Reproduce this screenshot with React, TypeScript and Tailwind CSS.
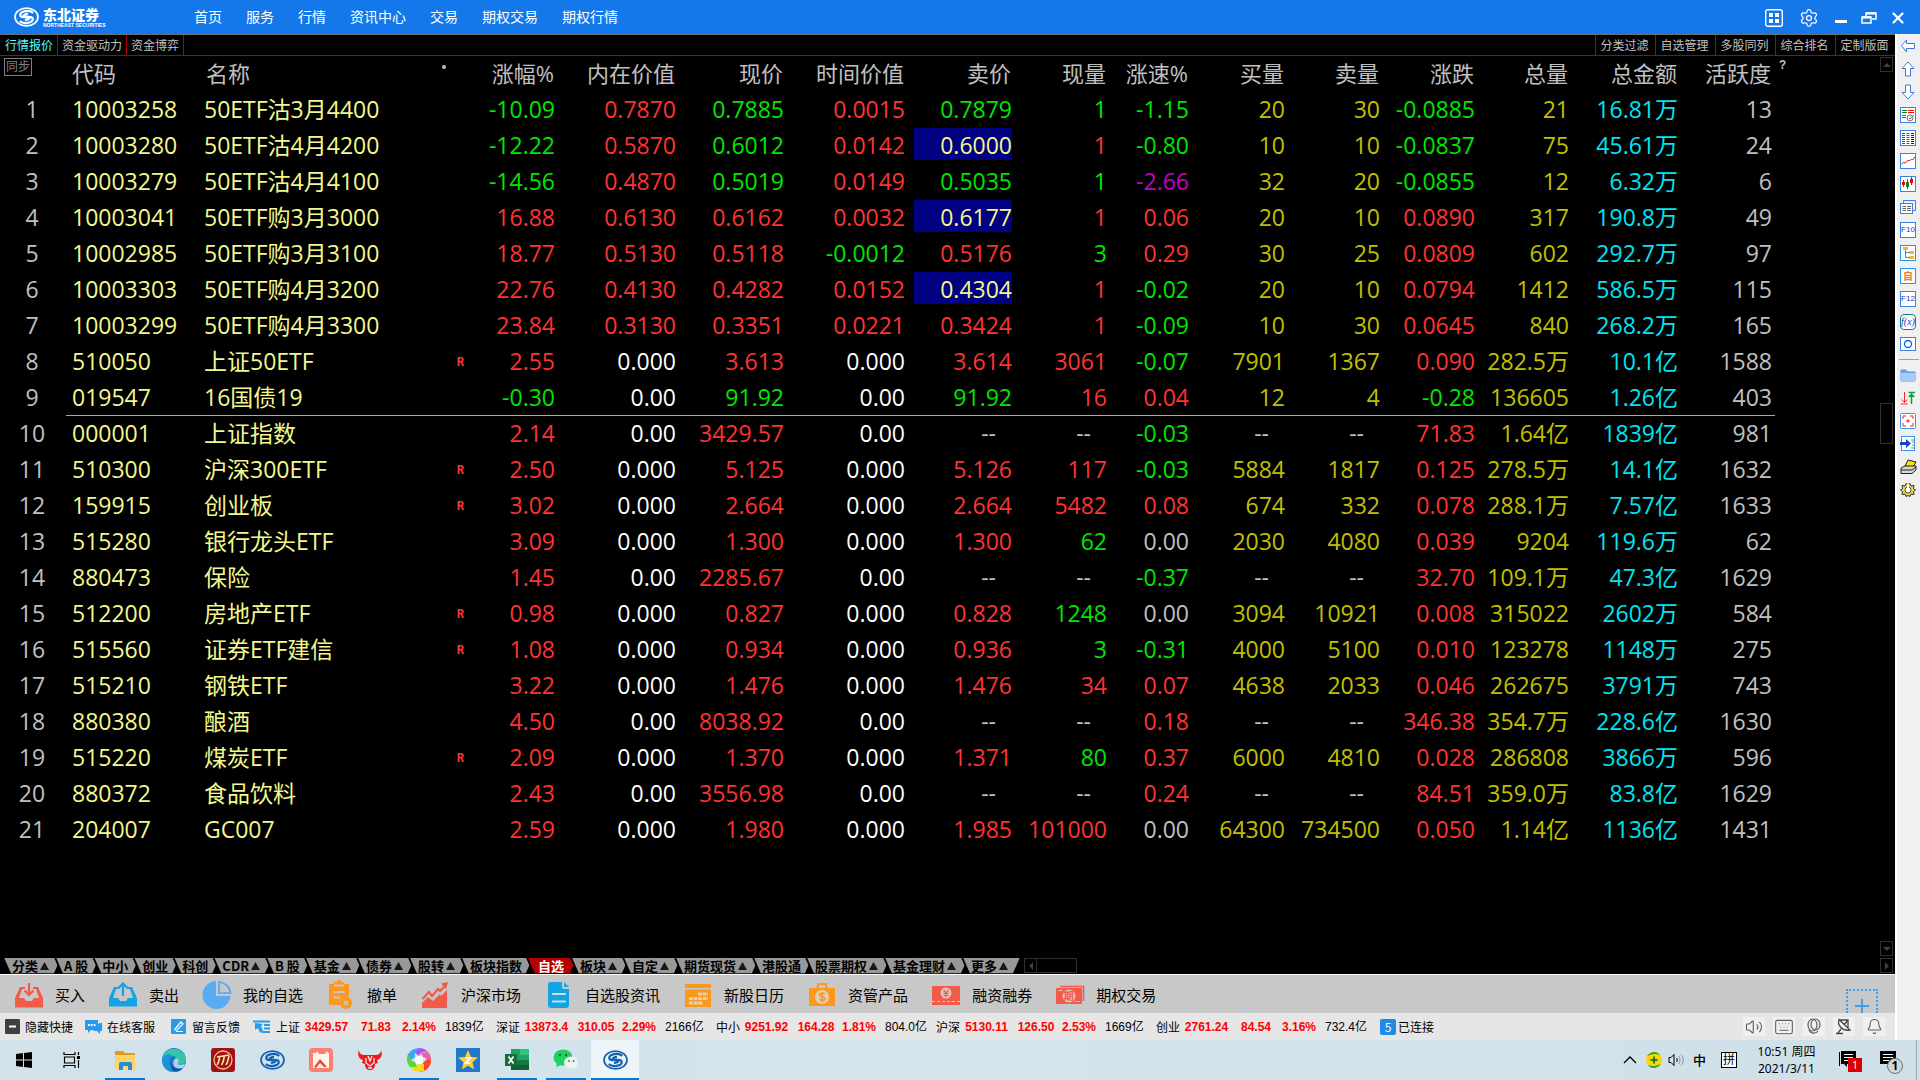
import type { ReactNode } from "react";
import { Bell, Keyboard, SatelliteDish, Settings, Volume2, X } from "lucide-react";

const tones: Record<string, string> = {
  r: "text-[#ff3232]",
  g: "text-[#00e600]",
  w: "text-white",
  n: "text-[#c0c0c0]",
  m: "text-[#c000c0]",
  h: "text-[#f4f88c]",
  y: "text-[#c0c000]",
  c: "text-[#00e4f4]",
};

const columns = [
  "涨幅%", "内在价值", "现价", "时间价值", "卖价", "现量", "涨速%",
  "买量", "卖量", "涨跌", "总量", "总金额", "活跃度",
];

// code | name | values in column order, then one tone letter per value
const quotes: [string, string, string, string][] = [
  ["10003258", "50ETF沽3月4400", "-10.09 0.7870 0.7885 0.0015 0.7879 1 -1.15 20 30 -0.0885 21 16.81万 13", "grgrgggyygycn"],
  ["10003280", "50ETF沽4月4200", "-12.22 0.5870 0.6012 0.0142 0.6000 1 -0.80 10 10 -0.0837 75 45.61万 24", "grgrhrgyygycn"],
  ["10003279", "50ETF沽4月4100", "-14.56 0.4870 0.5019 0.0149 0.5035 1 -2.66 32 20 -0.0855 12 6.32万 6", "grgrggmyygycn"],
  ["10003041", "50ETF购3月3000", "16.88 0.6130 0.6162 0.0032 0.6177 1 0.06 20 10 0.0890 317 190.8万 49", "rrrrhrryyrycn"],
  ["10002985", "50ETF购3月3100", "18.77 0.5130 0.5118 -0.0012 0.5176 3 0.29 30 25 0.0809 602 292.7万 97", "rrrgrgryyrycn"],
  ["10003303", "50ETF购4月3200", "22.76 0.4130 0.4282 0.0152 0.4304 1 -0.02 20 10 0.0794 1412 586.5万 115", "rrrrhrgyyrycn"],
  ["10003299", "50ETF购4月3300", "23.84 0.3130 0.3351 0.0221 0.3424 1 -0.09 10 30 0.0645 840 268.2万 165", "rrrrrrgyyrycn"],
  ["510050", "上证50ETF", "2.55 0.000 3.613 0.000 3.614 3061 -0.07 7901 1367 0.090 282.5万 10.1亿 1588", "rwrwrrgyyrycn"],
  ["019547", "16国债19", "-0.30 0.00 91.92 0.00 91.92 16 0.04 12 4 -0.28 136605 1.26亿 403", "gwgwgrryygycn"],
  ["000001", "上证指数", "2.14 0.00 3429.57 0.00 -- -- -0.03 -- -- 71.83 1.64亿 1839亿 981", "rwrwnngnnrycn"],
  ["510300", "沪深300ETF", "2.50 0.000 5.125 0.000 5.126 117 -0.03 5884 1817 0.125 278.5万 14.1亿 1632", "rwrwrrgyyrycn"],
  ["159915", "创业板", "3.02 0.000 2.664 0.000 2.664 5482 0.08 674 332 0.078 288.1万 7.57亿 1633", "rwrwrrryyrycn"],
  ["515280", "银行龙头ETF", "3.09 0.000 1.300 0.000 1.300 62 0.00 2030 4080 0.039 9204 119.6万 62", "rwrwrgnyyrycn"],
  ["880473", "保险", "1.45 0.00 2285.67 0.00 -- -- -0.37 -- -- 32.70 109.1万 47.3亿 1629", "rwrwnngnnrycn"],
  ["512200", "房地产ETF", "0.98 0.000 0.827 0.000 0.828 1248 0.00 3094 10921 0.008 315022 2602万 584", "rwrwrgnyyrycn"],
  ["515560", "证券ETF建信", "1.08 0.000 0.934 0.000 0.936 3 -0.31 4000 5100 0.010 123278 1148万 275", "rwrwrggyyrycn"],
  ["515210", "钢铁ETF", "3.22 0.000 1.476 0.000 1.476 34 0.07 4638 2033 0.046 262675 3791万 743", "rwrwrrryyrycn"],
  ["880380", "酿酒", "4.50 0.00 8038.92 0.00 -- -- 0.18 -- -- 346.38 354.7万 228.6亿 1630", "rwrwnnrnnrycn"],
  ["515220", "煤炭ETF", "2.09 0.000 1.370 0.000 1.371 80 0.37 6000 4810 0.028 286808 3866万 596", "rwrwrgryyrycn"],
  ["880372", "食品饮料", "2.43 0.00 3556.98 0.00 -- -- 0.24 -- -- 84.51 359.0万 83.8亿 1629", "rwrwnnrnnrycn"],
  ["204007", "GC007", "2.59 0.000 1.980 0.000 1.985 101000 0.00 64300 734500 0.050 1.14亿 1136亿 1431", "rwrwrrnyyrycn"],
];

const margin = ["510050", "510300", "159915", "512200", "515560", "515220"];

const menu = ["首页", "服务", "行情", "资讯中心", "交易", "期权交易", "期权行情"];
const views = ["行情报价", "资金驱动力", "资金博弈"];
const tools = ["分类过滤", "自选管理", "多股同列", "综合排名", "定制版面"];

const markets: [string, boolean][] = [
  ["分类", true], ["A 股", false], ["中小", false], ["创业", false], ["科创", false],
  ["CDR", true], ["B 股", false], ["基金", true], ["债券", true], ["股转", true],
  ["板块指数", false], ["自选", false], ["板块", true], ["自定", true], ["期货现货", true],
  ["港股通", false], ["股票期权", true], ["基金理财", true], ["更多", true],
];

const indices = [
  ["上证", "3429.57", "71.83", "2.14%", "1839亿"],
  ["深证", "13873.4", "310.05", "2.29%", "2166亿"],
  ["中小", "9251.92", "164.28", "1.81%", "804.0亿"],
  ["沪深", "5130.11", "126.50", "2.53%", "1669亿"],
  ["创业", "2761.24", "84.54", "3.16%", "732.4亿"],
];

function Svg({ w, h, children }: { w: number; h: number; children: ReactNode }) {
  return (
    <svg width={w} height={h} viewBox={`0 0 ${w} ${h}`} fill="none" aria-hidden="true" className="shrink-0">
      {children}
    </svg>
  );
}

function BrokerMark({ w, h, color }: { w: number; h: number; color: string }) {
  return (
    <svg width={w} height={h} viewBox="0 0 24 19" fill="none" stroke={color} aria-hidden="true" className="shrink-0">
      <ellipse cx="12" cy="9.5" rx="11" ry="8.6" strokeWidth="1.7" />
      <path d="M18.500 5.500C15 2.400 6 3.600 6 7.600c0 3 5.500 1.600 8 2.200 1.800.5.500 2.200-3.500 2.600" strokeWidth="2.200" />
      <path d="M5.500 13.500c3.500 3.100 12.500 1.900 12.500-2.100 0-3-5.500-1.600-8-2.200-1.800-.5-.5-2.200 3.500-2.600" strokeWidth="2.200" />
    </svg>
  );
}

const shortcuts: { label: string; icon: ReactNode }[] = [
  {
    label: "买入",
    icon: (
      <Svg w={28} h={28}>
        <path d="M5 6h5v2H7L4 17h5l2 3h6l2-3h5L21 8h-3V6h5l5 11v9.500H0V17z" fill="#f25a4a" />
        <path d="M14 2v11M9.500 9.500 14 14l4.500-4.500" stroke="#f25a4a" strokeWidth="2.200" />
      </Svg>
    ),
  },
  {
    label: "卖出",
    icon: (
      <Svg w={28} h={28}>
        <path d="M5 6h5v2H7L4 17h5l2 3h6l2-3h5L21 8h-3V6h5l5 11v8.500H0V17z" fill="#14a4e4" />
        <path d="M14 15V3M9.500 7 14 2.500 18.500 7" stroke="#14a4e4" strokeWidth="2.200" />
      </Svg>
    ),
  },
  {
    label: "我的自选",
    icon: (
      <Svg w={30} h={30}>
        <path d="M14 1v15h14.500A14 14 0 1 1 14 1z" fill="#5aaaf4" />
        <path d="M17 1.800c6 .6 11 5.200 11.500 11.400H17z" stroke="#5aaaf4" strokeWidth="1.800" />
      </Svg>
    ),
  },
  {
    label: "撤单",
    icon: (
      <Svg w={28} h={30}>
        <path d="M2 4h5V2h3a2 2 0 0 1 4 0h3v2h5v13a7 7 0 0 0-9 8H2z" fill="#fc981c" />
        <path d="M7 5.500h10M6 12h12M6 17.500h7" stroke="#c8c8c8" strokeWidth="1.800" />
        <circle cx="19" cy="23" r="6" fill="#fc981c" />
        <path d="m16.800 20.800 4.400 4.400m0-4.400-4.400 4.400" stroke="#c8c8c8" strokeWidth="1.500" />
      </Svg>
    ),
  },
  {
    label: "沪深市场",
    icon: (
      <Svg w={28} h={28}>
        <path d="M1 22l6-6 5 4 7-7 1 2 6-6v18H1z" fill="#f25a4a" />
        <path d="m1.500 18 6.500-7 3 4 6-7 2 2 6-6" stroke="#f25a4a" strokeWidth="2.200" />
        <path d="M20 2.500 27 1l-2 7z" fill="#f25a4a" />
      </Svg>
    ),
  },
  {
    label: "自选股资讯",
    icon: (
      <Svg w={28} h={28}>
        <path d="M6 1h11v5a2 2 0 0 0 2 2h5v16a3 3 0 0 1-3 3H6a3 3 0 0 1-3-3V4a3 3 0 0 1 3-3z" fill="#14a4e4" />
        <path d="m19 1 5 5h-5z" fill="#14a4e4" />
        <path d="M8 13h12M8 20.500h12" stroke="#c8e0ea" strokeWidth="2.200" strokeLinecap="round" />
      </Svg>
    ),
  },
  {
    label: "新股日历",
    icon: (
      <Svg w={28} h={28}>
        <path d="M1 3h26v4H1zM1 8.500h26V26H1z" fill="#fc981c" />
        <path d="M14 13h10M5 17.500h19M5 22h14" stroke="#e2d2b8" strokeWidth="3.200" strokeDasharray="3.800 .8" />
      </Svg>
    ),
  },
  {
    label: "资管产品",
    icon: (
      <Svg w={28} h={28}>
        <path d="M9 2h10v5h8v18H1V7h8zm2 2v3h6V4z" fill="#fc981c" fillRule="evenodd" />
        <circle cx="14" cy="16" r="7" fill="#dfd0b4" />
        <path d="M16.800 13.200c-1-1.400-5.200-1.500-5.200.7 0 2.600 5.200 1.200 5.200 3.800 0 2.200-4.400 2.200-5.400.6M14 11v10" stroke="#fc981c" strokeWidth="1.500" />
      </Svg>
    ),
  },
  {
    label: "融资融券",
    icon: (
      <Svg w={28} h={28}>
        <path d="M1 5h26l1 1v18H0V6z" fill="#f25a4a" />
        <circle cx="14" cy="12" r="5.500" fill="#dcc4c0" />
        <path d="m11.500 9 2.500 3 2.500-3M14 12v4M11.500 12.500h5M11.500 14.500h5" stroke="#f25a4a" strokeWidth="1.200" />
        <path d="M0 20.500h28" stroke="#dcc4c0" strokeDasharray="3 2" />
      </Svg>
    ),
  },
  {
    label: "期权交易",
    icon: (
      <div className="relative">
        <Svg w={29} h={28}>
          <path d="M4 5.500h23.500V20" stroke="#f25a4a" strokeWidth="1.600" />
          <rect y="7" width="26" height="16" rx="1" fill="#f25a4a" />
          <path d="M2.500 9.500h4M19 20.500h5" stroke="#dcc4c0" strokeWidth="1.200" />
          <circle cx="13" cy="15" r="6.500" fill="#dcc4c0" />
        </Svg>
        <span className="absolute top-[10px] left-2 text-[10px] leading-[10px] font-bold text-[#f25a4a]">期</span>
      </div>
    ),
  },
];

const sideTools: { label: string; icon: ReactNode }[] = [
  { label: "后退", icon: <Svg w={16} h={16}><path d="m1.500 7.500 5-5.500v3.500h8v5h-8V14z" fill="#fff" stroke="#3c78dc" /></Svg> },
  { label: "上移", icon: <Svg w={16} h={16}><path d="M8 1 2 7.500h3.500v7.500h5V7.500H14z" fill="#fff" stroke="#3c78dc" /></Svg> },
  { label: "下移", icon: <Svg w={16} h={16}><path d="M8 15 2 8.500h3.500V1h5v7.500H14z" fill="#fff" stroke="#3c78dc" /></Svg> },
  {
    label: "行情",
    icon: (
      <Svg w={16} h={16}>
        <rect x=".5" y=".5" width="15" height="15" fill="#fff" stroke="#3c82e6" />
        <path d="M2 3.500h5M2 5.500h5M2 8.500h4M2 10.500h4" stroke="#008a20" />
        <path d="M8 3.500h6M8 5.500h6" stroke="#f00" />
        <circle cx="10" cy="11" r="3" fill="#eee" stroke="#777" />
        <path d="m9 11 1 1 4-4" stroke="#777" />
      </Svg>
    ),
  },
  {
    label: "列表",
    icon: (
      <Svg w={16} h={16}>
        <rect x=".5" y=".5" width="15" height="15" fill="#fff" stroke="#3c82e6" />
        <path d="M3.500 3v11" stroke="#f00" strokeWidth="3" strokeDasharray="1 1" />
        <path d="M8 3v11" stroke="#008a20" strokeWidth="3" strokeDasharray="1 1" />
        <path d="M12.500 3v11" stroke="#00f" strokeWidth="3" strokeDasharray="1 1" />
      </Svg>
    ),
  },
  {
    label: "分时",
    icon: (
      <Svg w={16} h={16}>
        <rect x=".5" y=".5" width="15" height="15" fill="#fff" stroke="#3c82e6" />
        <path d="m1.500 11 2-1.500 2 .5 2-2.500 2 .5 2-2 1 1 2.500-3" stroke="#e01010" />
      </Svg>
    ),
  },
  {
    label: "K线",
    icon: (
      <Svg w={16} h={16}>
        <rect x=".5" y=".5" width="15" height="15" fill="#fff" stroke="#3c82e6" />
        <path d="M3.500 4v7M11.500 1v8" stroke="#f00" />
        <path d="M2 6h3v3H2zM10 3h3v4h-3z" fill="#f00" />
        <path d="M7.500 3v10" stroke="#008a20" />
        <path d="M6 6h3v5H6z" fill="#008a20" />
      </Svg>
    ),
  },
  {
    label: "窗口",
    icon: (
      <Svg w={16} h={16}>
        <path d="M3.500 4v-2.500h12v10h-2.500" stroke="#3c82e6" />
        <rect x=".5" y="4.500" width="12" height="10" fill="#fff" stroke="#3c82e6" />
        <path d="M2.500 7.500h3.500M7 7.500h4M2.500 9.500h3.500M7 9.500h4M2.500 11.500h3.500M7 11.500h4" stroke="#666" />
      </Svg>
    ),
  },
  { label: "基本资料", icon: <span className="flex h-4 w-4 items-center justify-center border border-[#3c82e6] bg-white font-['Liberation_Sans'] text-[8px] leading-none text-[#1a3cc8]">F10</span> },
  {
    label: "板块树",
    icon: (
      <Svg w={16} h={16}>
        <rect x=".5" y=".5" width="15" height="15" fill="#fff" stroke="#1e96f0" />
        <path d="M5.500 5v7.500H9M5.500 7.500H9" stroke="#3c82e6" />
        <path d="M3 2h5v3H3zM9 6h5v3H9zM9 11h5v3H9z" fill="#fcb428" />
      </Svg>
    ),
  },
  { label: "自选", icon: <span className="flex h-4 w-4 items-center justify-center border border-[#1e96f0] bg-white text-[10px] leading-none font-bold text-[#fc7828]">自</span> },
  { label: "委托", icon: <span className="flex h-4 w-4 items-center justify-center border border-[#3c82e6] bg-white font-['Liberation_Sans'] text-[8px] leading-none text-[#1a3cc8]">F12</span> },
  { label: "公式", icon: <span className="flex h-4 w-4 items-center justify-center rounded border border-[#108080] bg-white font-['Liberation_Serif'] text-[10px] leading-none text-[#1a3cc8] italic">f(x)</span> },
  {
    label: "圈选",
    icon: (
      <Svg w={16} h={16}>
        <rect x=".5" y=".5" width="15" height="13" fill="#fff" stroke="#3c82e6" />
        <circle cx="8" cy="7" r="3.500" stroke="#1464d2" strokeWidth="1.300" />
      </Svg>
    ),
  },
];

const sideExtras: { label: string; icon: ReactNode }[] = [
  {
    label: "打开",
    icon: (
      <Svg w={16} h={16}>
        <path d="M1 3h5l1.500 2H15v9H1z" fill="#6ea8f0" stroke="#5a94dc" />
        <path d="M1 6h14v8H1z" fill="#a8ccfa" />
      </Svg>
    ),
  },
  {
    label: "升降",
    icon: (
      <Svg w={16} h={16}>
        <path d="M4.500 2v10M1.500 9.500l3 3 3-3M1 14h6.500" stroke="#f02828" />
        <path d="M11.500 14V5M8.500 2.500h6.500" stroke="#189838" strokeWidth="1.500" />
        <path d="m11.500 3-3.500 4h7z" fill="#189838" />
      </Svg>
    ),
  },
  {
    label: "全屏",
    icon: (
      <Svg w={16} h={16}>
        <rect x=".5" y=".5" width="15" height="15" rx="1" fill="#fff" stroke="#3c96f0" />
        <path d="M3 6V3h3M10 3h3v3M13 10v3h-3M6 13H3v-3M8 6v4M6 8h4" stroke="#f02828" />
      </Svg>
    ),
  },
  {
    label: "跳转",
    icon: (
      <Svg w={16} h={16}>
        <rect x="1.500" y=".5" width="13" height="14" fill="#fff" stroke="#3c96f0" />
        <path d="M0 6h6V3l5 4.500L6 12V9H0z" fill="#1846c8" />
        <path d="M11 4h3M12 6h2M12 9h2M11 12h3" stroke="#888" />
      </Svg>
    ),
  },
  {
    label: "打印",
    icon: (
      <Svg w={17} h={16}>
        <path d="m5 7 3-6 8 2-3 5z" fill="#fce000" stroke="#222" />
        <path d="m1 9 4-2h11v4l-4 3.500H1z" fill="#d8d8d0" stroke="#222" />
        <path d="M1 11h11l4-3" stroke="#222" />
      </Svg>
    ),
  },
  {
    label: "设置",
    icon: (
      <Svg w={16} h={16}>
        <path d="m6 1.500 2 1 2-1 1 2.500 3-.5-.5 3L15.500 8l-2 1.500.5 3-3-.5-1 2.500-2-1-2 1L5 12l-3 .5.500-3L.5 8l2-1.500-.5-3 3 .5z" fill="#e8d848" stroke="#333" />
        <circle cx="8" cy="8" r="3" fill="#fff" stroke="#555" />
        <path d="M8 2v6" stroke="#fff" strokeWidth="2" />
      </Svg>
    ),
  },
];

const apps: { label: string; running?: boolean; active?: boolean; icon: ReactNode }[] = [
  {
    label: "文件资源管理器",
    running: true,
    icon: (
      <Svg w={24} h={24}>
        <path d="M2 3h8l2 2h10v3H2z" fill="#e09a20" />
        <path d="M2 7h20v14H2z" fill="#fcd468" />
        <path d="M6 22v-6a2 2 0 0 1 2-2h9a2 2 0 0 1 2 2v6h-4v-4h-5v4z" fill="#2c88d8" />
      </Svg>
    ),
  },
  {
    label: "Edge",
    icon: (
      <Svg w={24} h={24}>
        <circle cx="12" cy="12" r="12" fill="#1878c8" />
        <path d="M.5 10C2-2 22-3 24 11c0 5-5 6.500-9 5 2-3 0-8-5-8-4 0-8 0-9.500 2z" fill="#38c4a8" />
        <path d="M0 12c1-6 8-7 11-4-3 1-5 5-3 9 2 5 9 6 13 3-6 8-21 4-21-8z" fill="#1c94dc" />
        <path d="M14 10c3 1 3 4 1.500 6 2 1.500 5 1 7.500-.5l-2 4.500c-9 3-13-6-7-10z" fill="#d6e6ee" opacity=".8" />
        <path d="M9 15c1 6 7 7 12 5-5 5-13 5-12-5z" fill="#0c50a0" />
      </Svg>
    ),
  },
  {
    label: "交易端",
    icon: (
      <Svg w={24} h={24}>
        <rect width="24" height="24" rx="3" fill="#a41018" />
        <circle cx="12" cy="12" r="9" stroke="#f0c878" strokeWidth="1.300" />
        <path d="M6 17c2-2 2-6 3-9M10.500 17c2-2 2-6 3-9M15 17c2-2 2-6 3-9M6 9l12-2" stroke="#fce0a0" strokeWidth="1.600" />
      </Svg>
    ),
  },
  { label: "东北证券", icon: <BrokerMark w={25} h={20} color="#1464b4" /> },
  {
    label: "画图",
    icon: (
      <Svg w={24} h={24}>
        <rect width="24" height="24" rx="4" fill="#fc8070" />
        <path d="M4 5h3l1-2 2 3h6l2-3 1 2h1v15H4z" fill="#fff4ea" />
        <path d="m5 19 6-8 7 8h-3l-4-4-4 5z" fill="#e04838" />
      </Svg>
    ),
  },
  {
    label: "牛股",
    icon: (
      <Svg w={26} h={24}>
        <path d="M2 2c0 4 3 5 6 5h10c3 0 6-1 6-5 2 5 0 9-4 10l1 3-3 1c0 4-2 6-5 6s-5-2-5-6l-3-1 1-3C2 11 0 7 2 2z" fill="#f01818" />
        <path d="M9 10v5l4 3 4-3v-5M11 20h4M11 8l2 5 2-5" stroke="#e0ecf2" strokeWidth="1.300" />
      </Svg>
    ),
  },
  {
    label: "浏览器",
    running: true,
    icon: (
      <Svg w={24} h={24}>
        <path d="M12 0a12 12 0 0 1 9 4c-4-1-8 0-9 4L7 4z" fill="#b050f0" />
        <path d="M21 4c4 4 4 10 1 14 0-5-2-8-6-9l-2-4z" fill="#f060a0" />
        <path d="M24 12c0 7-5 12-12 12 4-2 5-5 4-9l4-4z" fill="#f84828" />
        <path d="M17 23c-6 2-12 0-15-5 4 2 8 1 10-2h5z" fill="#fcd818" />
        <path d="M3 19C-1 14-1 8 2 5c0 5 2 8 6 9l2 5z" fill="#58d838" />
        <path d="M1 7C3 2 8 0 13 0 9 2 7 5 8 9l-4 3z" fill="#38a8f8" />
        <circle cx="12" cy="12" r="4" fill="#fff" />
      </Svg>
    ),
  },
  {
    label: "星标",
    icon: (
      <Svg w={24} h={24}>
        <rect width="24" height="24" fill="#2478cc" />
        <path d="m12 2 3 7 7 .6-5.500 4.700L18 21.500 12 17.500 6 21.500l1.500-7.200L2 9.600 9 9z" fill="#fcd038" />
        <path d="M9.500 10h5l-5 5h5" stroke="#fff" strokeWidth="1.600" />
      </Svg>
    ),
  },
  {
    label: "Excel",
    running: true,
    icon: (
      <Svg w={24} h={24}>
        <path d="M6 1h9v11H6z" fill="#21a366" />
        <path d="M15 1h9v6h-9z" fill="#33c481" />
        <path d="M15 7h9v5h-9z" fill="#21a366" />
        <path d="M6 12h9v5H6z" fill="#107c41" />
        <path d="M15 12h9v5h-9z" fill="#107c41" />
        <path d="M6 17h18v5H6z" fill="#185c37" />
        <rect y="6" width="12" height="12" fill="#0f7038" />
        <path d="m3.500 8.500 5 7m0-7-5 7" stroke="#fff" strokeWidth="1.700" />
      </Svg>
    ),
  },
  {
    label: "微信",
    running: true,
    icon: (
      <Svg w={26} h={24}>
        <ellipse cx="10" cy="9.500" rx="9.500" ry="8" fill="#20d060" />
        <path d="m4 15-1 4 5-2z" fill="#20d060" />
        <circle cx="7" cy="7" r="1.200" fill="#107038" />
        <circle cx="13" cy="7" r="1.200" fill="#107038" />
        <ellipse cx="18" cy="14.500" rx="7" ry="6" fill="#f0f2f2" />
        <path d="m21 19 3 2.500-1-4z" fill="#f0f2f2" />
        <circle cx="16" cy="13" r=".9" fill="#666" />
        <circle cx="20.500" cy="13" r=".9" fill="#666" />
      </Svg>
    ),
  },
  { label: "东北证券行情", running: true, active: true, icon: <BrokerMark w={25} h={20} color="#1464b4" /> },
];

function TitleBar() {
  return (
    <header className="flex h-[34px] shrink-0 items-center bg-[#1478ea] text-white">
      <div className="flex w-[194px] items-center gap-1 pl-[14px]">
        <BrokerMark w={25} h={20} color="#fff" />
        <div>
          <p className="text-[14px] leading-[14px] font-black">东北证券</p>
          <p className="pt-px font-['Liberation_Sans'] text-[5px] leading-[6px] font-bold whitespace-nowrap">NORTHEAST SECURITIES</p>
        </div>
      </div>
      <nav className="flex flex-1 gap-6 pb-[2px] text-[14px] leading-5">
        {menu.map((m) => (
          <a key={m} href="#">{m}</a>
        ))}
      </nav>
      <div className="flex items-center pt-[2px] pr-[13px]">
        <button aria-label="布局" className="mr-4">
          <Svg w={18} h={18}>
            <rect x=".7" y=".7" width="16.600" height="16.600" rx="2" stroke="#fff" strokeWidth="1.400" />
            <path d="M4 4h4v4H4zM10 4h4v4h-4zM4 10h4v4H4zM10 10h4v4h-4z" fill="#fff" />
          </Svg>
        </button>
        <button aria-label="设置" className="mr-4"><Settings size={20} strokeWidth={1.5} /></button>
        <button aria-label="最小化" className="mr-[14px]">
          <Svg w={12} h={18}><path d="M0 12.500h12" stroke="#fff" strokeWidth="3" /></Svg>
        </button>
        <button aria-label="还原" className="mr-3">
          <Svg w={16} h={18}>
            <path d="M5 7V4h10v6h-4" stroke="#fff" strokeWidth="1.500" />
            <path d="M5 4.500h10M1 8.500h9" stroke="#fff" strokeWidth="2" />
            <path d="M1 8h9v6H1z" stroke="#fff" strokeWidth="1.500" />
          </Svg>
        </button>
        <button aria-label="关闭"><X size={18} strokeWidth={3} /></button>
      </div>
    </header>
  );
}

function ViewTabs() {
  return (
    <div className="flex h-[22px] shrink-0 justify-between border-t border-b border-t-[#707070] border-b-[#b00000] text-[12px] leading-5 text-[#c0c0c0]">
      <div className="flex">
        {views.map((v, i) => (
          <button key={v} className={`border-r border-[#b00000] px-1 ${i === 0 ? "pl-[5px] text-[#54fcfc]" : ""}`}>{v}</button>
        ))}
      </div>
      <div className="flex">
        {tools.map((t) => (
          <button key={t} className="w-[60px] border-l border-[#b00000] pr-[2px] text-center">{t}</button>
        ))}
      </div>
    </div>
  );
}

function QuoteTable() {
  return (
    <table className="w-full table-fixed border-separate border-spacing-0 text-right font-['Open_Sans','Noto_Sans_CJK_SC',sans-serif] text-[23px] leading-8 text-[#c0c0c0]">
      <colgroup>
        <col className="w-[66px]" />
        <col className="w-[132px]" />
        <col className="w-[267px]" />
        <col className="w-[90px]" />
        <col className="w-[121px]" />
        <col className="w-[108px]" />
        <col className="w-[121px]" />
        <col className="w-[107px]" />
        <col className="w-[95px]" />
        <col className="w-[82px]" />
        <col className="w-[96px]" />
        <col className="w-[95px]" />
        <col className="w-[95px]" />
        <col className="w-[94px]" />
        <col className="w-[109px]" />
        <col className="w-[97px]" />
        <col />
      </colgroup>
      <thead>
        <tr className="h-9 text-[22px] whitespace-nowrap">
          <th className="p-0 pl-1 text-left align-top font-normal">
            <button className="mt-[2px] block h-[18px] w-7 border border-[#808080] text-[12px] leading-4 text-[#808080]">同步</button>
          </th>
          <th className="p-0 pb-[2px] pl-[6px] text-left font-normal">代码</th>
          <th className="p-0 pb-[2px] pl-2 font-normal">
            <div className="flex justify-between">
              名称
              <span className="mt-2 mr-[19px] h-1 w-1 rounded-full bg-[#c0c0c0]" />
            </div>
          </th>
          {columns.map((c) => (
            <th key={c} className={`p-0 pb-[2px] font-normal ${c === "活跃度" ? "pr-1" : "pr-px"}`}>{c}</th>
          ))}
          <th className="p-0 pl-1 text-left align-top font-['Liberation_Mono'] text-[12px] leading-5 font-bold">?</th>
        </tr>
      </thead>
      <tbody>
        {quotes.map(([code, name, values, tone], i) => {
          const line = i === 8 ? "border-b border-[#c0c000]" : "";
          return (
            <tr key={code} className="h-9 whitespace-nowrap">
              <td className="p-0 pr-[2px] pb-[2px] text-center">{i + 1}</td>
              <td className={`p-0 pb-[2px] pl-[6px] text-left text-[#f4f88c] ${line}`}>{code}</td>
              <td className={`p-0 pr-px pb-[2px] pl-[6px] text-[#f4f88c] ${line}`}>
                <div className="flex items-center justify-between">
                  {name}
                  {margin.includes(code) && (
                    <span className="pt-1 font-['Liberation_Mono'] text-[12px] leading-4 font-bold text-[#ff3232]">R</span>
                  )}
                </div>
              </td>
              {values.split(" ").map((v, k) => (
                <td
                  key={columns[k]}
                  className={`p-0 ${tones[tone[k]]} ${line} ${k === 12 ? "pr-[3px]" : ""} ${v === "--" ? "pr-4" : ""} ${tone[k] === "h" ? "pb-1" : "pb-[2px]"}`}
                >
                  {tone[k] === "h" ? <div className="ml-[9px] h-8 bg-[#000080] leading-[34px]">{v}</div> : v}
                </td>
              ))}
              <td className="p-0" />
            </tr>
          );
        })}
      </tbody>
    </table>
  );
}

function ArrowBox({ label, d }: { label: string; d: string }) {
  return (
    <button aria-label={label} className="flex h-[15px] w-[13px] shrink-0 items-center justify-center border border-[#303030]">
      <Svg w={8} h={8}><path d={d} fill="#404040" /></Svg>
    </button>
  );
}

function MarketTabs() {
  return (
    <div className="flex h-[17px] shrink-0 items-center justify-between pr-[2px]">
      <div className="flex items-center">
        <div className="flex pl-[9px]">
          {markets.map(([m, more]) => {
            const on = m === "自选";
            return (
              <button
                key={m}
                className={`-ml-[7px] bg-black text-[13px] leading-4 font-bold whitespace-nowrap [clip-path:polygon(0_0,100%_0,calc(100%-7px)_100%,7px_100%)] ${on ? "relative text-white" : "text-black"}`}
              >
                <span
                  className={`flex h-4 items-center [clip-path:polygon(2px_0,100%_0,calc(100%-7px)_100%,9px_100%)] ${on ? "bg-[#b40000] pr-[13px] pl-3" : "bg-[#989898] pl-[10px]"} ${more ? "pr-[10px]" : "pr-[11px]"}`}
                >
                  <span className="leading-[14px]">{m}</span>
                  {more && (
                    <span className="flex w-[13px] justify-center">
                      <Svg w={9} h={8}><path d="M4.500 0 9 8H0z" fill="#181818" /></Svg>
                    </span>
                  )}
                </span>
              </button>
            );
          })}
        </div>
        <div className="ml-1 flex h-[15px] w-[53px] border border-[#303030]">
          <button aria-label="向左" className="flex w-3 items-center justify-center border-r border-[#303030]">
            <Svg w={8} h={8}><path d="M6 0v8L2 4z" fill="#404040" /></Svg>
          </button>
        </div>
      </div>
      <ArrowBox label="向右" d="M2 0v8l4-4z" />
    </div>
  );
}

function ShortcutBar() {
  return (
    <div className="flex h-[39px] shrink-0 items-center justify-between border-t border-white bg-[#c8c8c8] pr-[17px] pl-[15px]">
      <div className="flex items-center gap-6 pt-[2px] text-[15px] leading-5 text-black">
        {shortcuts.map((s) => (
          <button key={s.label} className="flex items-center gap-3 whitespace-nowrap">
            <span className="flex w-7 justify-center">{s.icon}</span>
            {s.label}
          </button>
        ))}
      </div>
      <button aria-label="添加" className="flex h-6 w-8 items-end justify-center self-end border-2 border-b-0 border-dotted border-[#3ca0f0]">
        <Svg w={14} h={14}><path d="M7 0v14M0 7h14" stroke="#3ca0f0" strokeWidth="2" /></Svg>
      </button>
    </div>
  );
}

function StatusBar() {
  return (
    <div className="flex h-[27px] shrink-0 items-center bg-[#e6e6e6] text-[12px] leading-4 whitespace-nowrap text-black">
      <button className="ml-[5px] flex w-20 items-center gap-[5px]">
        <Svg w={15} h={15}>
          <rect width="15" height="15" rx="1" fill="#404040" />
          <path d="M4 7.500h7" stroke="#fff" strokeWidth="2" />
        </Svg>
        隐藏快捷
      </button>
      <button className="flex w-[86px] items-center gap-[5px]">
        <Svg w={17} h={15}>
          <path d="M0 1h13v10H6l-3 3v-3H0z" fill="#289ce8" />
          <path d="M14 4h3v8h-2v3l-3-3H8" fill="#289ce8" />
          <path d="M3 6h7.500" stroke="#fff" strokeWidth="1.800" strokeDasharray="1.800 1" />
        </Svg>
        在线客服
      </button>
      <button className="flex w-[82px] items-center gap-[6px]">
        <Svg w={15} h={15}>
          <rect width="15" height="15" rx="1" fill="#289ce8" />
          <path d="m4 10 6-7 2 2-6 6H4zM5 12.500h7" stroke="#fff" strokeWidth="1.200" />
        </Svg>
        留言反馈
      </button>
      <div className="w-[23px]">
        <Svg w={18} h={14}>
          <path d="M0 1.500h17M11 5h6M11 8.500h6M9 12h8" stroke="#289ce8" strokeWidth="2" />
          <path d="m2 3 8 1-2 2 2 5-3 2-2-5-3 2z" fill="#289ce8" />
        </Svg>
      </div>
      {indices.map(([name, last, change, pct, amount]) => (
        <div key={name} className="grid grid-cols-[24px_53px_46px_40px_57px] text-center">
          <span>{name}</span>
          <b className="font-['Liberation_Sans'] text-[#ff0000]">{last}</b>
          <b className="font-['Liberation_Sans'] text-[#ff0000]">{change}</b>
          <b className="font-['Liberation_Sans'] text-[#ff0000]">{pct}</b>
          <span className="pl-[6px] text-left font-['Liberation_Sans','Noto_Sans_CJK_SC',sans-serif]">{amount}</span>
        </div>
      ))}
      <div className="ml-1 flex items-center gap-[2px]">
        <span className="flex h-4 w-4 items-center justify-center rounded-xs bg-[#1e8ce6] text-white">5</span>
        已连接
      </div>
      <div className="mr-[10px] ml-auto flex gap-2 text-[#606060]">
        <button aria-label="声音" className="flex h-[19px] w-[22px] items-center justify-center bg-[#f0f0f0]"><Volume2 size={18} strokeWidth={1.5} /></button>
        <button aria-label="键盘" className="flex h-[19px] w-[22px] items-center justify-center bg-[#f0f0f0]"><Keyboard size={20} strokeWidth={1.3} /></button>
        <button aria-label="耳机" className="flex h-[19px] w-[22px] items-center justify-center bg-[#f0f0f0]">
          <Svg w={16} h={17}>
            <ellipse cx="9.500" cy="6.500" rx="4.500" ry="5.500" stroke="#606060" strokeWidth="1.200" />
            <ellipse cx="6.500" cy="7" rx="4.500" ry="6" stroke="#606060" strokeWidth="1.200" />
            <path d="M3 12c2 4 7 4 9 1" stroke="#606060" strokeWidth="1.200" />
          </Svg>
        </button>
        <button aria-label="信号" className="flex h-[19px] w-[22px] items-center justify-center bg-[#f0f0f0]">
          <Svg w={16} h={17}>
            <path d="M3 1.500c-2 5 3 12 11 10.500zM4 2h8v8M8 7l4-5M5 11l-3 4M0 15.500h7" stroke="#484848" strokeWidth="1.300" />
          </Svg>
        </button>
        <button aria-label="提醒" className="flex h-[19px] w-[22px] items-center justify-center bg-[#f0f0f0]"><Bell size={17} strokeWidth={1.5} /></button>
      </div>
    </div>
  );
}

function SideBar() {
  return (
    <aside className="flex w-[25px] shrink-0 flex-col border-l-2 border-white bg-[#f0f0f0] pr-px">
      {sideTools.map((t) => (
        <button key={t.label} aria-label={t.label} className="flex h-[23px] items-center justify-center">{t.icon}</button>
      ))}
      <hr className="my-[3px] ml-[2px] border-[#a0a0a0]" />
      {sideExtras.map((t) => (
        <button key={t.label} aria-label={t.label} className="flex h-[23px] items-center justify-center">{t.icon}</button>
      ))}
    </aside>
  );
}

function TaskBar() {
  return (
    <footer className="flex h-10 shrink-0 bg-gradient-to-r from-[#d2e2ea] via-[#d4e4ec] to-[#cfe0e9] font-['Noto_Sans','Noto_Sans_CJK_SC',sans-serif] text-black">
      <button aria-label="开始" className="flex w-12 items-center justify-center">
        <Svg w={16} h={16}><path d="m0 2 7-1v6.500H0zM8 1l8-1v7.500H8zM0 8.500h7V15l-7-1zM8 8.500h8V16l-8-1z" fill="#000" /></Svg>
      </button>
      <button aria-label="任务视图" className="flex w-12 items-center justify-center">
        <Svg w={18} h={16}>
          <path d="M1 0v2.500h11V0M1 16v-2.500h11V16M1.500 5h10v6h-10zM15.500 0v3M15.500 8v8" stroke="#000" strokeWidth="1.200" />
          <path d="M14 4h3v3h-3z" fill="#000" />
        </Svg>
      </button>
      <div className="ml-[5px] flex flex-1 gap-px">
        {apps.map((a) => (
          <button key={a.label} aria-label={a.label} className={`flex w-12 flex-col items-center ${a.active ? "bg-[#eef5f8]" : ""}`}>
            <span className="flex flex-1 items-center">{a.icon}</span>
            <span className={`-mt-[2px] h-[2px] ${a.active ? "w-12" : "w-10"} ${a.running ? "bg-[#0078d7]" : ""}`} />
          </button>
        ))}
      </div>
      <div className="flex items-center">
        <button aria-label="显示隐藏的图标" className="mr-[9px]">
          <Svg w={14} h={8}><path d="m1 7 6-6 6 6" stroke="#000" strokeWidth="1.300" /></Svg>
        </button>
        <Svg w={16} h={16}>
          <circle cx="8" cy="8" r="8" fill="#fcd800" />
          <path d="M1 4c4-5 10-5 13-1-4-2-8-1-13 1zM15 12c-4 5-10 5-13 1 4 2 8 1 13-1z" fill="#38a028" />
          <path d="M8 4.500v7M4.500 8h7" stroke="#108030" strokeWidth="2" />
        </Svg>
        <button aria-label="音量" className="ml-[6px]">
          <Svg w={17} h={14}>
            <path d="M1 4.500h2l3-3v11l-3-3H1z" stroke="#000" />
            <path d="M8.500 5c1 1 1 3 0 4" stroke="#000" />
            <path d="M10.500 3c2 2 2 6 0 8M13 1.500c3 3 3 8 0 11" stroke="#8a949a" />
          </Svg>
        </button>
        <span className="ml-2 text-[13px] leading-4 font-medium">中</span>
        <span className="ml-[15px] flex h-4 w-4 items-center justify-center border border-black bg-white text-[12px] leading-none">拼</span>
        <p className="ml-5 w-[59px] text-center text-[12px] leading-[17px] whitespace-nowrap">
          10:51 周四
          <br />
          2021/3/11
        </p>
        <button aria-label="新消息" className="relative ml-[23px]">
          <Svg w={24} h={24}>
            <path d="M.5 4v14" stroke="#000" />
            <path d="M2 3h15v13H8v3l-3-3H2z" fill="#000" />
            <path d="M5 6.500h9M5 9.500h9M5 12.500h5" stroke="#fff" />
          </Svg>
          <span className="absolute top-[10px] left-[9px] h-[14px] w-[14px] bg-[#d80000] text-[10px] leading-[14px] text-white">1</span>
        </button>
        <button aria-label="通知" className="relative mr-[13px] ml-4">
          <Svg w={24} h={24}>
            <path d="M1 3h16v13h-5v3l-3-3H1z" fill="#000" />
            <path d="M4 6.500h10M4 9.500h10M4 12.500h6" stroke="#fff" />
          </Svg>
          <span className="absolute top-[10px] left-2 h-4 w-4 rounded-full border border-[#707070] bg-[#d0d6da] text-[12px] leading-[14px] font-bold">1</span>
        </button>
        <span className="h-full w-1 border-l border-[#98a8b0]" />
      </div>
    </footer>
  );
}

export default function App() {
  return (
    <div className="flex h-screen flex-col overflow-hidden bg-black font-['Noto_Sans_CJK_SC',sans-serif]">
      <TitleBar />
      <div className="flex min-h-0 flex-1">
        <main className="flex min-w-0 flex-1 flex-col">
          <ViewTabs />
          <div className="flex min-h-0 flex-1 pr-[2px]">
            <div className="min-w-0 flex-1">
              <QuoteTable />
            </div>
            <div className="flex flex-col py-px">
              <ArrowBox label="向上" d="M0 6h8L4 2z" />
              <span className="grow-2" />
              <span className="h-[41px] border border-[#303030]" />
              <span className="grow-3" />
              <ArrowBox label="向下" d="M0 2h8L4 6z" />
            </div>
          </div>
          <MarketTabs />
          <ShortcutBar />
          <StatusBar />
        </main>
        <SideBar />
      </div>
      <TaskBar />
    </div>
  );
}
